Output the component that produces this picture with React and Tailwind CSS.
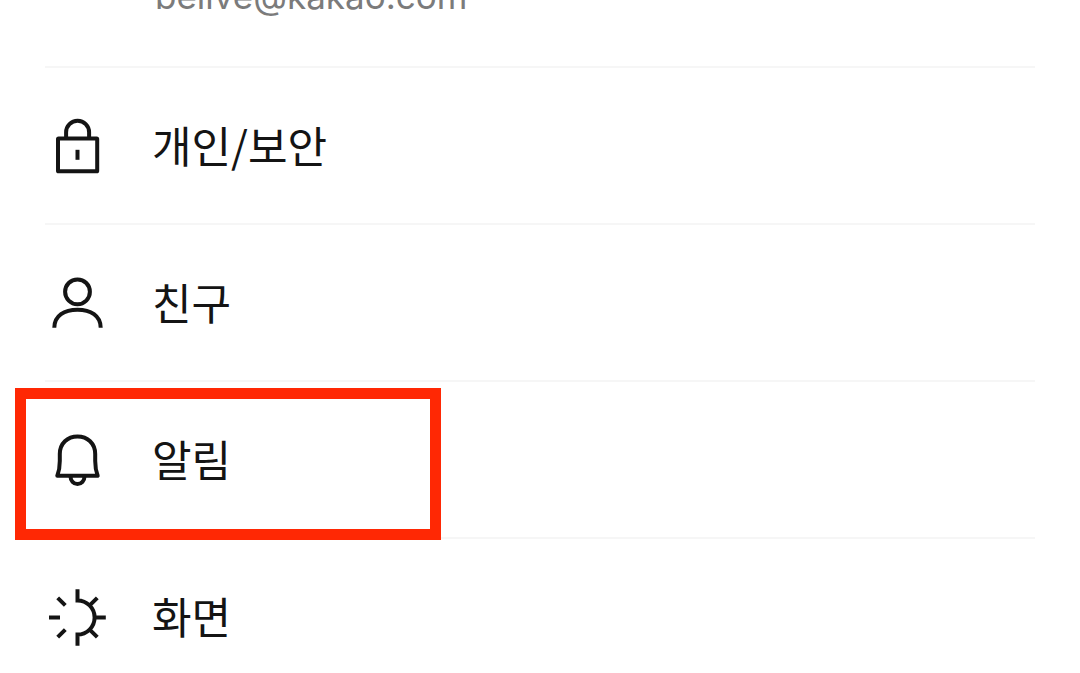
function LockIcon() {
    return (
        <svg viewBox="0 0 65 65" className="size-[65px] shrink-0" fill="none" stroke="currentColor" strokeWidth="4" aria-hidden="true">
            <rect x="13" y="25.5" width="39.2" height="32.8" rx="0.6" />
            <path d="M21.1 25.5V19.3a11.5 11.5 0 0 1 23 0v6.2" />
            <path d="M32.5 36.8v10" />
        </svg>
    );
}

function PersonIcon() {
    return (
        <svg viewBox="0 0 65 65" className="size-[65px] shrink-0" fill="none" stroke="currentColor" strokeWidth="4" aria-hidden="true">
            <circle cx="32.5" cy="21.8" r="12.4" />
            <path d="M9.3 57.8C9.3 45.5 19.5 39.7 32.5 39.7S55.7 45.5 55.7 57.8" />
        </svg>
    );
}

function BellIcon() {
    return (
        <svg viewBox="0 0 65 65" className="size-[65px] shrink-0" fill="none" stroke="currentColor" strokeWidth="4" strokeLinejoin="round" aria-hidden="true">
            <path d="M12.3 48.8C14 44.5 14.8 40 14.8 34V27C14.8 16.5 22.5 9.4 32.5 9.4S50.2 16.5 50.2 27V34C50.2 40 51 44.5 52.7 48.8Z" />
            <path d="M25.5 49.5a7 7.5 0 0 0 14 0" />
        </svg>
    );
}

function SunIcon() {
    return (
        <svg viewBox="0 0 65 65" className="size-[65px] shrink-0" fill="none" stroke="currentColor" strokeWidth="4" aria-hidden="true">
            <path d="M32.5 5.2v11.2a17.1 17.1 0 0 1 0 34.2v11.2" />
            <path d="M4 33.5h11M50 33.5h10.8" />
            <path d="M12.7 13.9l7.6 7.5M12.7 53.1l7.6-7.5M52.3 13.9l-7.4 7.3M52.3 53.1l-7.4-7.3" />
        </svg>
    );
}

const menuItems = [
    { label: '개인/보안', Icon: LockIcon },
    { label: '친구', Icon: PersonIcon },
    { label: '알림', Icon: BellIcon, highlighted: true },
    { label: '화면', Icon: SunIcon },
];

function MenuRow({ label, Icon, highlighted }) {
    return (
        <li className="relative border-b-2 border-[#f6f6f6]">
            <button type="button" className="w-full flex items-center gap-[42px] py-[45px] text-left cursor-pointer">
                <Icon />
                <span className="pb-[3px] text-[43px] leading-[60px]">{label}</span>
            </button>
            {highlighted && (
                <div className="absolute -left-[30px] top-[6px] w-[426px] h-[152px] z-10 border-[11px] border-[#ff2804] pointer-events-none" />
            )}
        </li>
    );
}

function App() {
    return (
        <main className="h-screen overflow-hidden bg-white px-[45px] text-[#141414] font-['Noto_Sans_CJK_KR',sans-serif]">
            {/* account row, scrolled most of the way out */}
            <div className="h-[68px] flex flex-col justify-end overflow-hidden border-b-2 border-[#f6f6f6]">
                <p className="pl-[110px] pb-[46px] text-[35px] leading-[48px] text-[#7b7b7b] font-['Inter',sans-serif]">
                    belive@kakao.com
                </p>
            </div>
            <ul>
                {menuItems.map((item) => (
                    <MenuRow key={item.label} {...item} />
                ))}
            </ul>
        </main>
    );
}

export default App;
